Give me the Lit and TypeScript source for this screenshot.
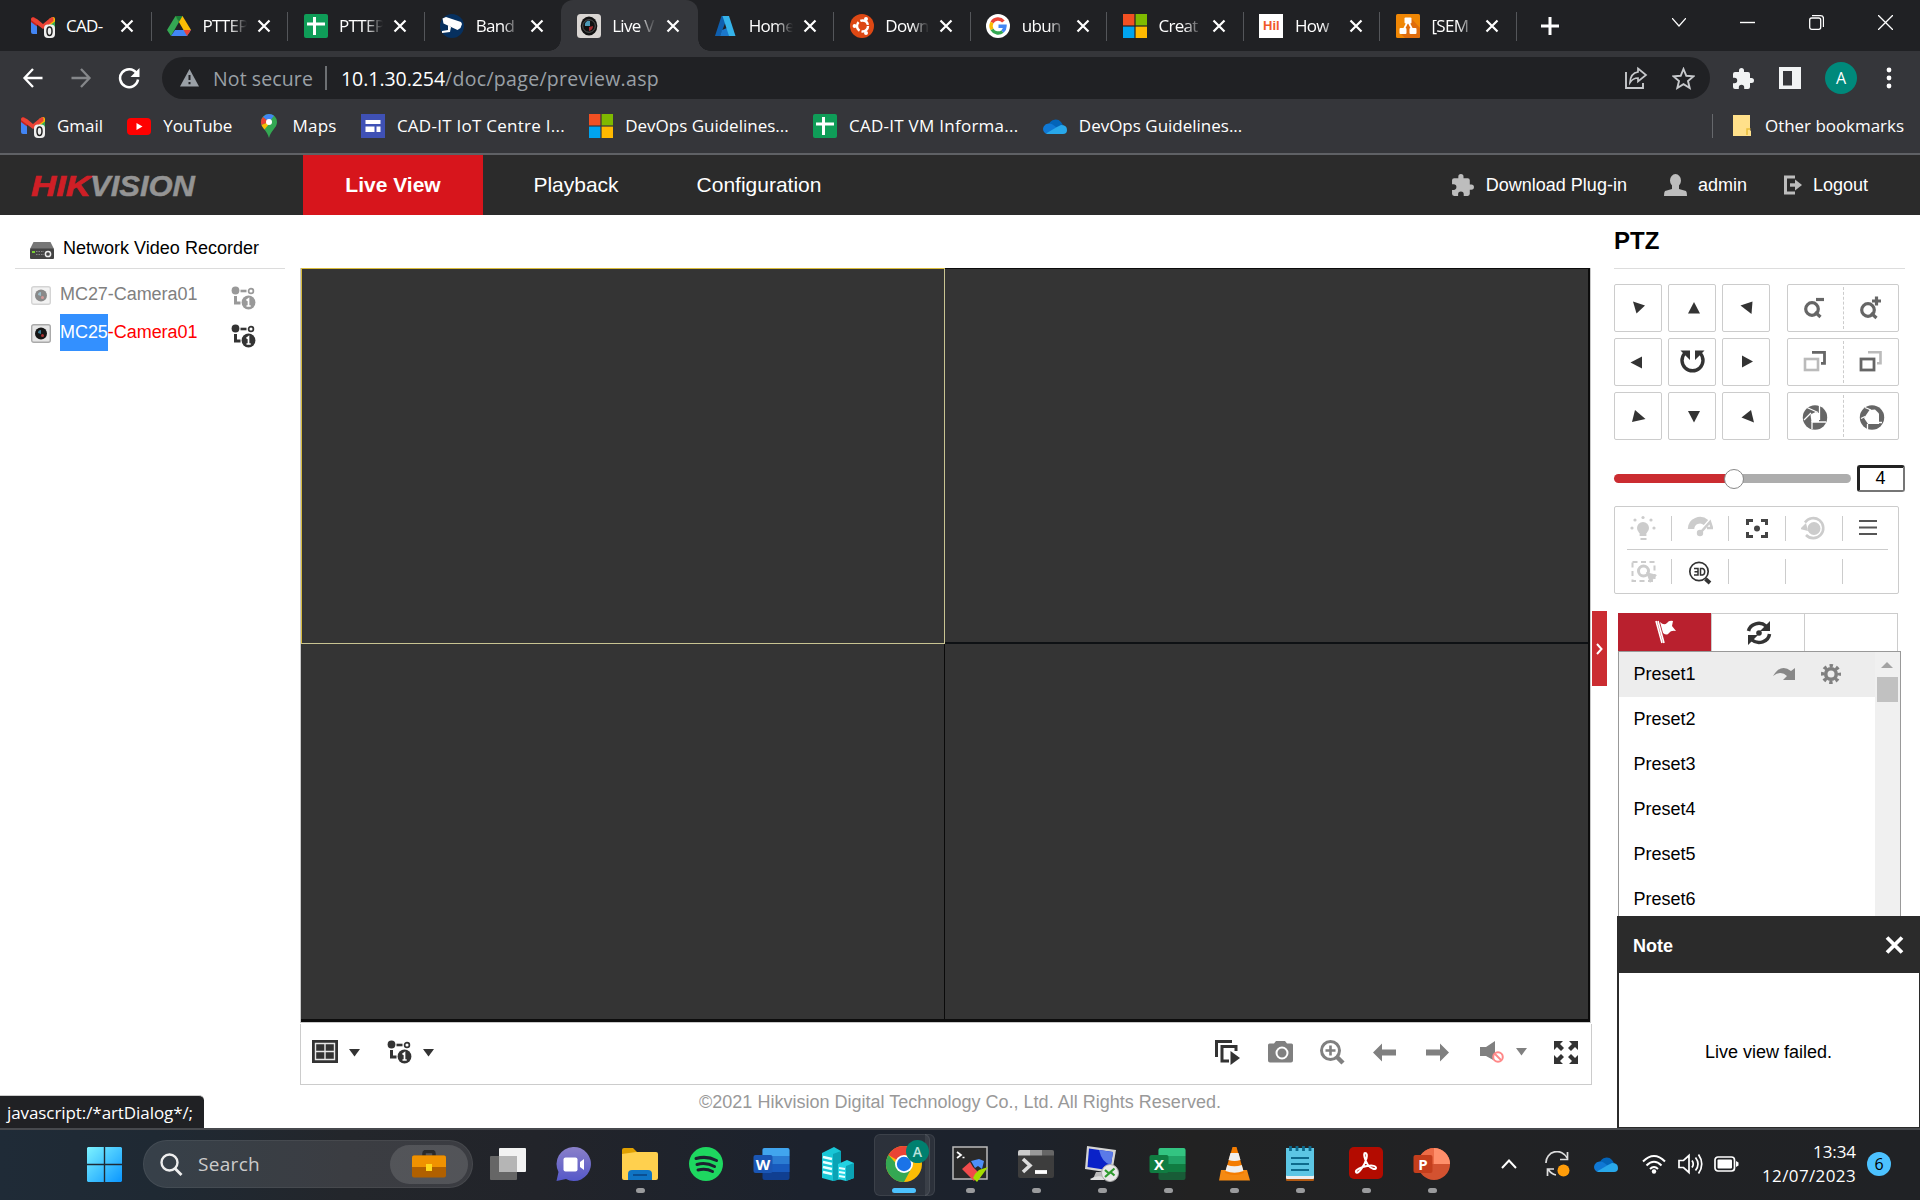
import { LitElement, html, svg, css, nothing, TemplateResult, SVGTemplateResult } from "lit";

/* Text run whose tracking is adjusted so it spans a given width. */
class FitText extends LitElement {
  static properties = { text: {}, w: { type: Number } };
  declare text: string;
  declare w: number;
  static styles = css`
    :host { display: inline-block; white-space: pre; flex: none; }
  `;
  render() {
    return html`<span>${this.text}</span>`;
  }
  firstUpdated() {
    const s = this.renderRoot.querySelector("span") as HTMLElement;
    const gap = (this.w - s.getBoundingClientRect().width) / this.text.length;
    s.style.letterSpacing = gap.toFixed(3) + "px";
  }
}
customElements.define("fit-text", FitText);

const fit = (text: string, w: number) => html`<fit-text .text=${text} .w=${w}></fit-text>`;
const ico = (w: number, h: number, body: SVGTemplateResult, vb = `0 0 ${w} ${h}`) =>
  html`<svg width=${w} height=${h} viewBox=${vb} fill="none">${body}</svg>`;

/* ---------- brand icons ---------- */
const gmail = () => ico(24, 24, svg`
  <path d="M0 5v13q0 2 2 2h4V9z" fill="#4285f4"/><path d="M18 9v11h4q2 0 2-2V5z" fill="#34a853"/>
  <path d="M18 5v7l6-4.500V5q0-2-2-2z" fill="#fbbc04"/><path d="M0 5v3l6 4.500V6L3 3Q0 3 0 5z" fill="#c5221f"/>
  <path d="M2 3.500 6 5l6 5 6-5 3-2 1.500 1v3L12 15 0 6Q0 3 2 3.500z" fill="#ea4335"/>
  <rect x="13" y="10.500" width="11" height="13.500" rx="4" fill="#eee"/>
  <ellipse cx="18.500" cy="17.200" rx="2.500" ry="4.200" stroke="#222" stroke-width="1.500"/>`);
const drive = () => ico(24, 24, svg`
  <path d="M8.500 2h7l8.500 14h-7.500z" fill="#fbbc04"/><path d="M8.500 2 12 8 4 22 0 16z" fill="#34a853"/>
  <path d="M4 22l4-6h16l-4 6z" fill="#4285f4"/><path d="M8.500 2h7L12 8z" fill="#188038"/><path d="M16.500 16H24l-4 6z" fill="#ea4335"/>`);
const sheets = () => ico(24, 24, svg`
  <rect width="24" height="24" rx="2" fill="#0f9d58"/><path d="M3 10h18M10.500 3v18" stroke="#fff" stroke-width="3"/>`);
const cctv = () => ico(24, 24, svg`
  <circle cx="12" cy="12" r="12" fill="#06305f"/><path d="M2.500 4.500 6 3l15 5 1 2-1.500 4-3 2L3.500 9.500z" fill="#fff"/><path d="M8 11l3 2-1 5-8 1v-2l6-1z" fill="#fff"/>`);
const lens = () => ico(24, 24, svg`
  <rect width="24" height="24" rx="3.500" fill="#d9d5d2"/><ellipse cx="12" cy="12" rx="8.300" ry="9.500" fill="#111"/>
  <circle cx="12" cy="12" r="6.300" stroke="#555" stroke-width="1"/><path d="M8 12a4 4 0 0 1 5-5v5z" fill="#4d9ab8"/><path d="M12 13l4-1q0 4-4 5z" fill="#a3282c"/>`);
const azure = () => ico(24, 24, svg`
  <path d="M8.500 2H15L7 22H2z" fill="#0f5fae"/><path d="M9 16l5-2 5 8H7z" fill="#1b78cc"/><path d="M9.500 2H16l6.500 20H16z" fill="#35b3ea"/>`);
const ubuntu = () => ico(24, 24, svg`
  <circle cx="12" cy="12" r="12" fill="#dd4814"/><circle cx="12.500" cy="12" r="5.500" stroke="#fff" stroke-width="2.400" stroke-dasharray="9.500 2"/>
  <circle cx="4.600" cy="12" r="2" fill="#fff"/><circle cx="16" cy="5" r="2" fill="#fff"/><circle cx="16" cy="19" r="2" fill="#fff"/>`);
const google = () => ico(24, 24, svg`
  <circle cx="12" cy="12" r="12" fill="#fff"/><g stroke-width="3.400"><path d="M17.400 7.500A7 7 0 0 0 6 8.500" stroke="#ea4335"/>
  <path d="M6 8.500a7 7 0 0 0 0 7" stroke="#fbbc05"/><path d="M6 15.500a7 7 0 0 0 10.500 2" stroke="#34a853"/><path d="M16.500 17.500a7 7 0 0 0 2.500-5.300h-6.500" stroke="#4285f4"/></g>`);
const msft = () => ico(24, 24, svg`
  <path d="M0 0h11.400v11.400H0z" fill="#f25022"/><path d="M12.600 0H24v11.400H12.600z" fill="#7fba00"/>
  <path d="M0 12.600h11.400V24H0z" fill="#00a4ef"/><path d="M12.600 12.600H24V24H12.600z" fill="#ffb900"/>`);
const hil = () => html`<span class="hil">Hil</span>`;
const drawio = () => ico(24, 24, svg`
  <rect width="24" height="24" rx="1.500" fill="#f08705"/><path d="M15 4l9 10v8q0 2-2 2H9l-5-5z" fill="#df6c0c"/>
  <path d="M12 7 7 17M12 7l5 10" stroke="#fff" stroke-width="1.800"/><rect x="8.500" y="3.500" width="7" height="6" rx="1" fill="#fff"/>
  <rect x="3.500" y="14" width="7" height="6" rx="1" fill="#fff"/><rect x="13.500" y="14" width="7" height="6" rx="1" fill="#fff"/>`);
const youtube = () => ico(24, 24, svg`<rect y="4" width="24" height="17" rx="4" fill="#f00"/><path d="M9.500 9l6 3.500-6 3.500z" fill="#fff"/>`);
const maps = () => ico(24, 24, svg`
  <path d="M12 0a8 8 0 0 1 8 8c0 6-6 8-8 16-2-8-8-10-8-16a8 8 0 0 1 8-8z" fill="#34a853"/><path d="M12 0a8 8 0 0 0-6 3l6 5 5-6.200A8 8 0 0 0 12 0z" fill="#4285f4"/>
  <path d="M6 3a8 8 0 0 0-1.500 8L12 8z" fill="#ea4335"/><path d="M4.500 11q1 2.500 3 4.500L12 10V8z" fill="#fbbc04"/><circle cx="12" cy="8" r="3" fill="#fff"/>`);
const gsite = () => ico(24, 24, svg`<rect width="24" height="24" fill="#3f51b5"/><path d="M4.500 6h15v4h-15zM4.500 12.500h9V18h-9zM15.500 12.500h4V18h-4z" fill="#fff"/>`);
const onedrive = () => ico(24, 24, svg`
  <path d="M6 10a7 6.500 0 0 1 12-2l2 3-8 5z" fill="#0364b8"/><path d="M1 18a5.500 5.500 0 0 1 5-8.500q3 0 5 2l8 6-1 2.500H5q-3 0-4-2z" fill="#0f78d4"/>
  <path d="M3 19.500 14 13l4-2q6 0 6 5 0 4-4 4H6q-2 0-3-.5z" fill="#28a8ea"/>`);

/* ---------- page icons ---------- */
const puzzle = (c: string, s: number) => ico(s, s, svg`
  <path fill=${c} d="M20.500 11H19V7a2 2 0 0 0-2-2h-4V3.500a2.500 2.500 0 0 0-5 0V5H4a2 2 0 0 0-2 2v3.800h1.500a2.700 2.700 0 0 1 0 5.400H2V20a2 2 0 0 0 2 2h3.800v-1.500a2.700 2.700 0 0 1 5.400 0V22H17a2 2 0 0 0 2-2v-4h1.500a2.500 2.500 0 0 0 0-5z"/>`, "1 0 23 23");
const tree = (c: string) => ico(25, 24, svg`
  <circle cx="4.500" cy="4.500" r="3.900" fill=${c}/><path d="M9.500 5h6" stroke=${c} stroke-width="2.600"/><circle cx="20" cy="5" r="2.400" stroke=${c} stroke-width="1.700"/>
  <path d="M4.500 10v7h5" stroke=${c} stroke-width="3"/><circle cx="17.500" cy="16.500" r="6.900" fill=${c}/><path d="M15.500 14.500l2-1.500v6.500M15.500 20h4.200" stroke="#fff" stroke-width="1.700"/>`);
const camIcon = (dim: boolean) => html`<span class="cam ${dim ? "dim" : ""}">${ico(20, 19, svg`
  <rect x=".7" y=".7" width="18.600" height="17.600" rx="2" fill="#e6e6e6" stroke="#aaa" stroke-width="1.400"/><circle cx="10" cy="9.500" r="6" fill="#151515"/>
  <path d="M7 9a3 3 0 0 1 3-3v4z" fill="#3d7d95"/><circle cx="11.500" cy="11.500" r="1.500" fill="#a33"/>`)}</span>`;
const nvr = () => ico(24, 19, svg`
  <path d="M3.500 1h17L24 8H0z" fill="#777"/><rect y="7.500" width="24" height="10.500" rx="1" fill="#444"/><path d="M2 11h3" stroke="#7c3" stroke-width="2"/>
  <path d="M6 10.500h8M6 13.500h8" stroke="#888" stroke-width="1.200" stroke-dasharray="1.500 1"/><circle cx="18" cy="13" r="2.600" fill="#444" stroke="#eee" stroke-width="1.500"/>`);
const caret = (c: string) => ico(11, 8, svg`<path d="M0 0h11L5.500 7.500z" fill=${c}/>`);

const dirs: TemplateResult[] = [
  ico(48, 48, svg`<path d="M19 17.500l12 4-8.500 8z" fill="#333"/>`),
  ico(48, 48, svg`<path d="M26 18l6 11.500H20z" fill="#333"/>`),
  ico(48, 48, svg`<path d="M30.500 17.500l-1 12.500-11-8.500z" fill="#333"/>`),
  ico(48, 48, svg`<path d="M16.500 24.500L28 18.500v12z" fill="#333"/>`),
  ico(48, 48, svg`<path d="M16.500 15.500a10.500 10.500 0 1 0 16 0" stroke="#333" stroke-width="3.400"/><path d="M12.500 12.500h9.500v9.500zM36.500 12.500H27v9.500z" fill="#333"/>`),
  ico(48, 48, svg`<path d="M31 23.500l-11-6v12z" fill="#333"/>`),
  ico(48, 48, svg`<path d="M21 18l10.500 9L18 30z" fill="#333"/>`),
  ico(48, 48, svg`<path d="M26 30.500l6-11.500H20z" fill="#333"/>`),
  ico(48, 48, svg`<path d="M29 18l3 12.500-12.500-5z" fill="#333"/>`),
];
const lensOps: [TemplateResult, TemplateResult][] = [
  [
    ico(28, 28, svg`<circle cx="11" cy="16" r="6.300" stroke="#666" stroke-width="3.200"/><path d="M14 19l5.500 5" stroke="#666" stroke-width="3.200"/><path d="M15 6.500h8" stroke="#666" stroke-width="3.200"/>`),
    ico(28, 28, svg`<circle cx="11" cy="17" r="6.300" stroke="#666" stroke-width="3.200"/><path d="M14 20l5.500 5" stroke="#666" stroke-width="3.200"/><path d="M15 8h9M19.500 3.500v9" stroke="#666" stroke-width="3.200"/>`),
  ],
  [
    ico(28, 28, svg`<rect x="4" y="12" width="13" height="11" stroke="#bbb" stroke-width="2.600"/><path d="M11 5.300h12.500v11H20" stroke="#666" stroke-width="2.800"/>`),
    ico(28, 28, svg`<path d="M11 5.300h12.500v11H20" stroke="#bbb" stroke-width="2.600"/><rect x="4" y="12" width="13" height="11" stroke="#666" stroke-width="2.800"/>`),
  ],
  [
    ico(28, 28, svg`<circle cx="14" cy="15.500" r="12.200" fill="#666"/><path d="M9.500 12.500l5-2.500 3.500 1v9h-7.500z" fill="#fff"/><path d="M6 5.500l11 5M3 18l7-7M11 19v8M11 20h14M18.500 4v14" stroke="#fff" stroke-width="1.300"/>`),
    ico(28, 28, svg`<circle cx="15" cy="15.500" r="12.200" fill="#666"/><path d="M12.500 8 18 7.500l4 4V22H11L7 16z" fill="#fff"/><path d="M8 5.500l6 2.500M4 16.500l4-2M10.500 22v5M22 20.500h3" stroke="#fff" stroke-width="1.300"/>`),
  ],
];
const funcIcons: (TemplateResult | null)[] = [
  ico(26, 26, svg`<circle cx="13" cy="13" r="6" fill="#ccc"/><path d="M10.500 16h5v4h-5zM10.500 24h6" stroke="#ccc" stroke-width="1.800" fill="#ccc"/><g fill="#ccc"><circle cx="13" cy="2.500" r="1.600"/><circle cx="5" cy="5" r="1.600"/><circle cx="21" cy="5" r="1.600"/><circle cx="2" cy="13" r="1.600"/><circle cx="24" cy="13" r="1.600"/></g>`),
  ico(26, 26, svg`<path d="M4 14a9 9 0 0 1 15-6.500" stroke="#ccc" stroke-width="6.500"/><path d="M14 17l9-10 2 6h-5" stroke="#ccc" stroke-width="2.600"/><circle cx="13" cy="18" r="3.200" fill="#ccc"/>`),
  ico(26, 26, svg`<path d="M3.500 10V5.500H9M17 5.500h5.500V10M22.500 17v4.500H17M9 21.500H3.500V17" stroke="#444" stroke-width="3"/><circle cx="13" cy="13.500" r="3" fill="#444"/>`),
  ico(26, 26, svg`<path d="M4 7.500a10 10 0 1 1 1 12.500" stroke="#ccc" stroke-width="2.600"/><circle cx="13" cy="13.500" r="6.500" fill="#ccc"/><path d="M-1 14l6-6 2 8z" fill="#ccc"/>`),
  ico(26, 26, svg`<path d="M4 6h18M4 12.500h18M4 19h18" stroke="#555" stroke-width="2"/>`),
  ico(26, 26, svg`<rect x="1.500" y="3" width="22" height="19" stroke="#ccc" stroke-width="2" stroke-dasharray="5 3.500"/><circle cx="12.500" cy="12" r="5" stroke="#ccc" stroke-width="3"/><path d="M15 13l11 3-7 8z" fill="#ccc"/>`),
  ico(26, 26, svg`<circle cx="12" cy="12.500" r="9.200" stroke="#333" stroke-width="1.700"/><path d="M18.500 20l4.500 4" stroke="#333" stroke-width="4"/><path d="M7 9.500h4V16H7M7.500 12.700H11M13.500 9.500V16h2q2.200-.5 2.200-3.200t-2.200-3.300z" stroke="#333" stroke-width="1.500"/>`),
  null, null, null,
];

/* ---------- task bar icons ---------- */
const office = (dark: string, shades: string[], letter: string, round = false) => ico(38, 38, svg`
  ${round
    ? svg`<circle cx="21" cy="19" r="16" fill=${shades[2]}/><path d="M21 3a16 16 0 0 1 16 16H21z" fill=${shades[0]}/><path d="M21 3v16H5A16 16 0 0 1 21 3z" fill=${shades[1]}/>`
    : svg`<rect x="9.500" y="3" width="27" height="32" rx="2" fill=${shades[3]}/><path d="M9.500 5q0-2 2-2h23q2 0 2 2v6h-27z" fill=${shades[0]}/><path d="M9.500 11h27v8h-27z" fill=${shades[1]}/><path d="M9.500 19h27v8h-27z" fill=${shades[2]}/>`}
  <rect x=".5" y="10" width="19" height="18" rx="2" fill=${dark}/>
  <text x="10" y="24.500" text-anchor="middle" font-family="Open Sans, sans-serif" font-weight="700" font-size="15" fill="#fff">${letter}</text>`);

interface App { icon: TemplateResult; dot?: boolean; active?: boolean }
const apps: App[] = [
  { icon: ico(38, 38, svg`<rect x="1" y="11" width="27" height="24" rx="1" fill="#666"/><rect x="10" y="3" width="27" height="24" rx="1" fill="#f2f2f2"/><path d="M10 11h18v16H10z" fill="#b5b5b5"/>`) },
  { icon: ico(38, 38, svg`<path d="M18 2a17 17 0 1 1-7 32l-9.500 2 2-9A17 17 0 0 1 18 2z" fill="url(#tg)"/><rect x="8.500" y="12.500" width="14" height="14" rx="2" fill="#fff"/><path d="M25 17l4-3v11l-4-3z" fill="#fff"/><defs><linearGradient id="tg" x1="0" y1="0" x2="0" y2="1"><stop stop-color="#8a80c9"/><stop offset="1" stop-color="#5558c9"/></linearGradient></defs>`) },
  { dot: true, icon: ico(38, 38, svg`<path d="M1 5q0-2 2-2h9l4 4v6H1z" fill="#e0a000"/><path d="M1 9l14-2h20q2 0 2 2v24q0 2-2 2H3q-2 0-2-2z" fill="#ffd04e"/><path d="M7 35V29q0-4 4-4h16q4 0 4 4v6z" fill="#0f74c4"/><path d="M12 30h14" stroke="#0a4f92" stroke-width="2"/>`) },
  { icon: ico(38, 38, svg`<circle cx="19" cy="19" r="17" fill="#1ed760"/><path d="M9 13.500q11-3 20.500 2M10 19.500q9-2.500 17.500 2M11 25q8-2 14.500 1.500" stroke="#1c2230" stroke-width="3" stroke-linecap="round"/>`) },
  { icon: office("#1a56b4", ["#41a5ee", "#2b7cd3", "#185abd", "#103f91"], "W") },
  { icon: ico(38, 38, svg`<path d="M3 8l12-6 7 4v28l-8 2-11-3z" fill="#19c6d6"/><path d="M14 9l8-3v28l-8 2z" fill="#0aa3b5"/><path d="M4 12l9 2M4 17l9 2M4 22l9 2M4 27l9 2" stroke="#e8ffff" stroke-width="2.500"/><path d="M19 19l9-4 7 3v15l-8 3-8-2z" fill="#22d3e2"/><path d="M27 21l8-3v15l-8 3z" fill="#0aa3b5"/><path d="M20 23l6 1M20 27l6 1M20 31l6 1" stroke="#e8ffff" stroke-width="2"/>`) },
  { active: true, icon: ico(38, 38, svg`<circle cx="19" cy="19" r="18" fill="#fbbc04"/><path d="M19 19 3.400 10A18 18 0 0 1 34.600 10H19z" fill="#ea4335"/><path d="M3.400 10A18 18 0 0 0 19 37l7-13-7-5-6.500 1z" fill="#34a853"/><circle cx="19" cy="19" r="9" fill="#fff"/><circle cx="19" cy="19" r="7.200" fill="#1a73e8"/>`) },
  { dot: true, icon: ico(38, 38, svg`<rect x="2" y="2" width="34" height="32" fill="#2a2a2a" stroke="#bbb" stroke-width="1.500"/><path d="M6 7l4 3-4 3M11.500 12.500h2" stroke="#fff" stroke-width="1.700"/><path d="M11 24l8-7 3 5 6 6-5 8-3-3z" fill="#f14b4b"/><path d="M20 16l8-2 5 2-2 8-4-3-3 2z" fill="#4f8ff7"/><path d="M24 29l4-4 3-1 6-2-11 15-4-4z" fill="#a4dd00"/>`) },
  { dot: true, icon: ico(38, 38, svg`<rect x="1" y="5" width="36" height="28" rx="2" fill="#3d3d3d"/><path d="M1 7q0-2 2-2h10v5.500H1z" fill="#ccc"/><path d="M13 5h12v5.500H13z" fill="#999"/><path d="M25 5h10q2 0 2 2v3.500H25z" fill="#666"/><path d="M6 14l7 6.500L6 27" stroke="#ddd" stroke-width="3.600"/><path d="M18 27h12" stroke="#fff" stroke-width="3.800"/>`) },
  { dot: true, icon: ico(38, 38, svg`<path d="M13 27h10v7H10z" fill="#bbb"/><path d="M7 34q6-4 14-2v3H8z" fill="#ddd"/><path d="M4 1l29 4-4 23-27-4z" fill="#d5d5d5"/><path d="M6 3.500l24 3.500-3 18.500L4.500 22z" fill="#0a22c8"/><path d="M16 5l14 2-2 13q-9-2-12-15z" fill="#5a7ae8"/><circle cx="27" cy="28" r="8.500" fill="#e8e8e8" stroke="#aaa"/><path d="M22 25l4 3.500-4 3.500M31.500 23.500l-4 3.500 4 3.500" stroke="#2f9a2f" stroke-width="2.200"/>`) },
  { dot: true, icon: office("#107c41", ["#33c481", "#21a366", "#107c41", "#185c37"], "X") },
  { dot: true, icon: ico(38, 38, svg`<path d="M6 25h26l3 10.500H4z" fill="#f58a12"/><path d="M17.500 2h4L29 28q-9.500 4-19 0z" fill="#f47c00"/><path d="M15.500 8h8l2 7q-6 2-12 0zM12.200 20q7 2.500 14.600 0l1.700 6q-9 3.500-18 0z" fill="#eee"/>`) },
  { dot: true, icon: ico(38, 38, svg`<rect x="5" y="30" width="28" height="6" rx="1" fill="#b35a12"/><rect x="5" y="3" width="28" height="31" rx="1" fill="#eee"/><rect x="5" y="3" width="28" height="28" rx="1" fill="#5cc6e4"/><path d="M10 13h18M10 19h18M10 25h18" stroke="#0d6a8c" stroke-width="2.200"/><path d="M9.500 1v5M16 1v5M22.500 1v5M29 1v5" stroke="#0d6a8c" stroke-width="2.800"/>`) },
  { dot: true, icon: ico(38, 38, svg`<rect x="2" y="2" width="34" height="32" rx="5" fill="#b30b00"/><path d="M18 8c4 0 1 9-3 15-2 3-5 6-6 4s5-5 11-6 9 0 9 2-5 1-8-3-5-12-3-12z" stroke="#fff" stroke-width="2"/>`) },
  { dot: true, icon: office("#c43e1c", ["#ff8f6b", "#ed6c47", "#d35230"], "P", true) },
];

interface Tab { t: string; icon: TemplateResult; active?: boolean; sep?: boolean }
const tabs: Tab[] = [
  { t: "CAD-", icon: gmail(), sep: true },
  { t: "PTTEP", icon: drive(), sep: true },
  { t: "PTTEP", icon: sheets(), sep: true },
  { t: "Band", icon: cctv() },
  { t: "Live V", icon: lens(), active: true },
  { t: "Home", icon: azure(), sep: true },
  { t: "Down", icon: ubuntu(), sep: true },
  { t: "ubun", icon: google(), sep: true },
  { t: "Creat", icon: msft(), sep: true },
  { t: "How", icon: hil(), sep: true },
  { t: "[SEM", icon: drawio(), sep: true },
];
const bookmarks: [TemplateResult, string, number][] = [
  [gmail(), "Gmail", 46], [youtube(), "YouTube", 69], [maps(), "Maps", 44],
  [gsite(), "CAD-IT IoT Centre I...", 168], [msft(), "DevOps Guidelines...", 163.5],
  [sheets(), "CAD-IT VM Informa...", 169.5], [onedrive(), "DevOps Guidelines...", 163.5],
];

class AppRoot extends LitElement {
  static styles = css`
    :host { display: block; width: 1920px; height: 1200px; overflow: hidden; position: relative; background: #fff;
      font: 18px/1 "Liberation Sans", Arial, sans-serif; color: #000; }
    * { box-sizing: border-box; }
    svg { display: block; flex: none; }
    .row { display: flex; align-items: center; }
    .ui { font-family: "Open Sans", "Noto Sans", sans-serif; }
    .grow { flex: 1; }
    .s11 { width: 11px; } .s12 { width: 12px; } .s24 { width: 24px; } .s26 { width: 26px; }
    .s27 { width: 27px; } .s28 { width: 28px; } .s30 { width: 30px; } .s31 { width: 31px; }

    .tabs { height: 51px; background: #202124; padding-left: 15px; color: #fff; font-size: 17px; }
    .tab { width: 136.550px; height: 51px; padding-left: 15.500px; position: relative; flex: none; }
    .tab.on { background: #35363a; border-radius: 12px 12px 0 0; }
    .tab.on::before, .tab.on::after { content: ""; position: absolute; bottom: 0; width: 12px; height: 12px; }
    .tab.on::before { left: -12px; background: radial-gradient(circle at 0 0, transparent 11.500px, #35363a 12px); }
    .tab.on::after { right: -12px; background: radial-gradient(circle at 100% 0, transparent 11.500px, #35363a 12px); }
    .tab.sep::after { content: ""; position: absolute; right: 0; top: 12px; width: 1px; height: 29px; background: #54565a; }
    .title { width: 44px; margin: 0 10px 0 11.500px; overflow: hidden; white-space: nowrap; line-height: 24px; letter-spacing: -.7px;
      -webkit-mask-image: linear-gradient(90deg, #000 60%, transparent 100%); mask-image: linear-gradient(90deg, #000 60%, transparent 100%); }
    .tab:first-child .title { -webkit-mask-image: none; mask-image: none; }
    .hil { width: 24px; height: 24px; background: #fff; color: #f0592a; font: 700 13px/24px "Liberation Sans", sans-serif; text-align: center; flex: none; }
    .plus { margin-left: 24px; }
    .win { gap: 54px; padding: 0 27px 7px 0; }

    .bar { height: 54px; background: #35363a; padding: 0 22px; }
    .nav { gap: 26px; width: 140px; flex: none; }
    .omni { width: 1548px; flex: none; height: 42px; border-radius: 21px; background: #202124; padding: 0 15px 0 18px; color: #9aa0a6; font-size: 19.500px; }
    .omni .vsep { width: 2px; height: 24px; background: #6d7073; margin: 0 14px 0 12px; }
    .omni .host { color: #fff; }
    .omni .lab { margin-left: 14px; }
    .omni fit-text { position: relative; top: 1px; }
    .tools { padding-left: 22px; gap: 24px; flex: none; }
    .tools svg:last-child { margin-left: 5px; }
    .ava { width: 32px; height: 32px; border-radius: 50%; background: #00897b; color: #fff; font-size: 16px; line-height: 32px; text-align: center; flex: none; }
    .marks { height: 50px; background: #35363a; padding: 0 16px 7px 21px; color: #fff; font-size: 17px; border-bottom: 2px solid #5f6165; }
    .marks .mk { gap: 12px; margin-right: 24.300px; }
    .marks fit-text { position: relative; top: -.5px; }
    .marks .vs { width: 1px; height: 24px; background: #66686c; margin-right: 20px; }
    .marks .other { gap: 14px; }

    .head { height: 60px; background: #2b2b2b; color: #fff; }
    .logo { width: 303px; padding-left: 31px; }
    .nv { font-size: 21px; height: 60px; line-height: 60px; text-align: center; }
    .nv.live { width: 180px; background: #d7151c; font-weight: 700; }
    .nv.pb { width: 186px; } .nv.cf { width: 180px; }
    .hr { padding-right: 52px; }
    .hr .u { gap: 11px; margin-left: 37px; }

    .page { display: flex; height: 913px; }
    .side { width: 300px; padding: 14px 15px 0; }
    .side .nvr { height: 40px; gap: 9px; padding: 0 0 1px 15px; border-bottom: 1px solid #dcdcdc; }
    .side .nvr svg { position: relative; top: 2px; }
    .list { padding: 6px 0 0 16px; }
    .dev { height: 38px; color: #808080; }
    .dev .nm { width: 180px; padding-left: 9px; line-height: 37px; flex: none; letter-spacing: -.05px; }
    .dev.on { color: #f00; }
    .dev mark { display: inline-block; background: #3390ff; color: #fff; }
    .cam { display: block; width: 20px; position: relative; top: 1px; } .cam.dim { opacity: .5; }
    .dev > svg { position: relative; top: 4px; }

    .main { width: 1292px; padding-top: 53px; }
    .video { width: 1291px; height: 755px; border: solid #c9c9c9; border-width: 0 1px 1px 1px; }
    .grid { height: 754px; display: grid; grid-template: 375px 1fr / 644px 1fr; background: #343434; border: solid #0c0c0c; border-width: 1px 2px 3px 0; }
    .cell { border-right: 1px solid #0a0a0a; border-bottom: 2px solid #0e1114; }
    .cell:nth-child(2n) { border-right: 0; }
    .cell:nth-child(n+3) { border-bottom: 0; }
    .cell.sel { border: 1px solid #d8bb3c; margin: -1px 0 0 0; height: 376px; border-right-color: #c9c492; border-bottom-color: #c9c492; }
    .ctl { height: 61px; margin-top: 1px; border: 1px solid #ccc; border-top: 0; padding: 0 13px 5px 11px; }
    .ctl .dd { gap: 11px; }
    .ctl > svg { position: relative; top: .5px; }
    .ctl .dd svg:last-child { position: relative; top: 1px; }
    .foot { color: #999; margin-top: 8px; padding-left: 399px; }

    .ptz { flex: 1; padding: 14px 15px 0 22px; }
    .ptz h2 { margin: 0; font-size: 24px; line-height: 24px; height: 40px; border-bottom: 1px solid #ddd; }
    .pad { display: flex; gap: 17px; margin-top: 15px; }
    .dirs { display: grid; grid-template-columns: repeat(3, 48px); gap: 6px; }
    .dirs div, .ops div { border: 1px solid #ccc; border-radius: 2px; height: 48px; }
    .dirs svg { margin: -1px; }
    .ops { display: grid; gap: 6px; width: 112px; }
    .ops div { display: flex; align-items: center; }
    .ops span { flex: 1; display: flex; justify-content: center; height: 42px; align-items: center; padding-bottom: 3px; }
    .ops div:last-child span { padding-bottom: 1px; }
    .ops span:first-child { border-right: 1px dashed #ccc; }
    .speed { margin-top: 25px; height: 27px; }
    .track { width: 237px; height: 9px; border-radius: 5px; background: linear-gradient(90deg, #cb2c31 120px, #adadad 120px); display: flex; align-items: center; padding-left: 110px; margin-right: 6px; }
    .knob { width: 20px; height: 20px; border-radius: 50%; background: #fff; border: 1px solid #888; flex: none; }
    .num { width: 48px; height: 27px; border: 3px solid; border-width: 3px 2px 2px 3px; border-color: #222 #767676 #767676 #222; border-radius: 3px; text-align: center; line-height: 20px; padding-right: 2px; margin-top: -1px; }
    .func { width: 285px; height: 88px; margin-top: 14px; border: 1px solid #ccc; border-radius: 2px; display: grid; grid-template: 43px 43px / repeat(5, 57px); }
    .func div { display: flex; align-items: center; justify-content: center; }
    .func div span { height: 25px; width: 57px; border-right: 1px solid #ccc; display: flex; justify-content: center; align-items: center; }
    .func div:nth-child(5n) span { border: 0; }
    .func div:nth-child(-n+5) { border-bottom: 1px solid #ccc; }
    .func div:nth-child(1) { margin-left: 12px; }
    .func div:nth-child(1) span { width: 45px; padding-right: 12px; }
    .func div:nth-child(5) { margin-right: 12px; }
    .func div:nth-child(5) span { padding-left: 4px; }
    .func div:nth-child(6) span { padding-left: 2px; }
    .ptabs { display: flex; margin: 19px 0 0 4px; width: 280px; height: 38px; }
    .ptabs div { flex: 1; border: 1px solid #ccc; border-bottom: 0; margin-left: -1px; display: flex; align-items: center; justify-content: center; padding-left: 2px; }
    .ptabs .on { background: #b9202e; border-color: #b9202e; margin-left: 0; }
    .presets { margin-left: 4px; width: 283px; height: 290px; border: 1px solid #999; display: flex; }
    .items { flex: 1; }
    .items .it { height: 45px; padding: 0 34px 2px 14.500px; gap: 25px; }
    .items .it:first-child { background: #ededed; }
    .scroll { width: 25px; background: #f0f0f0; padding: 10px 2px; }
    .scroll svg { margin-left: 4px; }
    .thumb { width: 21px; height: 25px; background: #c1c1c1; margin-top: 9px; }

    .handle { position: absolute; left: 1592px; top: 611px; width: 15px; height: 75px; background: #cb2c31; display: flex; align-items: center; justify-content: center; }
    .note { position: absolute; left: 1617px; top: 916px; width: 303px; height: 212px; background: #fff; border: solid #2b2b2b; border-width: 0 1px 1px 2px; }
    .note header { height: 57px; background: #2b2b2b; color: #fff; font-weight: 700; justify-content: space-between; padding: 2px 15px 0 14px; }
    .note header svg { position: relative; top: -1px; }
    .note p { margin: 0; text-align: center; line-height: 158px; padding-right: 1px; }
    .status { position: absolute; left: 0; top: 1095px; width: 204px; height: 33px; background: #202124; color: #fff; border-radius: 0 5px 0 0; border-top: 1px solid #ccc; padding-left: 7px; font-size: 17px; }

    .task { height: 72px; border-top: 2px solid #47494d; background: linear-gradient(90deg, #1f2b37 0, #1f2933 8%, #23262b 18%, #22242a 28%, #1c222d 42%, #1c222c 52%, #222222 62%, #212224 75%, #202225 100%); color: #fff; padding: 0 0 2px 87px; }
    .search { width: 330px; height: 48px; margin: 0 2px 0 21px; border-radius: 24px; background: #ffffff1c; border: 1px solid #ffffff10; padding: 0 4px 0 16px; color: #ccc; font-size: 19px; gap: 15px; flex: none; }
    .case { width: 78px; height: 39px; border-radius: 20px; background: #ffffff20; justify-content: center; }
    .app { width: 66px; height: 66px; display: flex; flex-direction: column; align-items: center; justify-content: center; position: relative; flex: none; }
    .dot { position: absolute; top: 57px; width: 9px; height: 5px; border-radius: 3px; background: #9a9b9d; }
    .app.on::before, .app.on::after { content: ""; position: absolute; left: 3px; top: 3px; width: 54px; height: 60px; border-radius: 6px; background: #ffffff12; border: 1px solid #ffffff14; }
    .app.on::after { left: 54px; width: 9px; border-radius: 0 6px 6px 0; border-left: 0; }
    .app.on svg { position: relative; }
    .app.on .dot { width: 24px; background: #4cc2ff; }
    .bdg { position: absolute; left: 35px; top: 9px; width: 23px; height: 23px; border-radius: 50%; background: #00806f; color: #b9e3dd; font-size: 14px; font-weight: 600; line-height: 23px; text-align: center; z-index: 1; }
    .tray { margin-left: 36px; }
    .clock { display: flex; flex-direction: column; align-items: flex-end; font-size: 17px; width: 117px; gap: 7px; padding-bottom: 2px; }
    .six { width: 24px; height: 24px; border-radius: 50%; background: #4cc2ff; color: #000; font-size: 16px; line-height: 24px; text-align: center; margin-left: 11px; }
  `;

  renderBrowser() {
    const W = "#fff";
    return html`
      <div class="tabs row ui">
        ${tabs.map((t) => html`<div class="tab row ${t.active ? "on" : ""} ${t.sep ? "sep" : ""}">
          ${t.icon}<div class="title">${t.t}</div>${ico(14, 14, svg`<path d="M1.500 1.500l11 11M12.500 1.500l-11 11" stroke="#fff" stroke-width="2.200"/>`)}</div>`)}
        <div class="plus">${ico(18, 18, svg`<path d="M0 9h18M9 0v18" stroke="#fff" stroke-width="3"/>`)}</div>
        <div class="grow"></div>
        <div class="row win">
          ${ico(14, 9, svg`<path d="M0 0l7 8 7-8" stroke=${W} stroke-width="1.200"/>`)}
          ${ico(15, 15, svg`<path d="M0 7.500h15" stroke=${W} stroke-width="1.400"/>`)}
          ${ico(15, 15, svg`<rect x=".7" y="3" width="11" height="11.300" rx="2" stroke=${W} stroke-width="1.300"/><path d="M3 .7h8.500q3 0 3 3V12" stroke=${W} stroke-width="1.300"/>`)}
          ${ico(15, 15, svg`<path d="M0 0l15 15M15 0L0 15" stroke=${W} stroke-width="1.300"/>`)}
        </div>
      </div>
      <div class="bar row ui">
        <div class="row nav">
          ${ico(22, 22, svg`<path d="M20.500 11H3M11 2L2.500 11l8.500 9" stroke=${W} stroke-width="2.300"/>`)}
          ${ico(22, 22, svg`<path d="M1.500 11H19M11 2l8.500 9-8.500 9" stroke="#85878a" stroke-width="2.300"/>`)}
          ${ico(22, 22, svg`<path d="M18.500 6A9 9 0 1 0 20 12.500" stroke=${W} stroke-width="2.500"/><path d="M21.500 1v9h-9z" fill=${W}/>`)}
        </div>
        <div class="omni row">
          ${ico(19, 18, svg`<path d="M9.500 0L19 17.500H0z" fill="#9aa0a6"/><path d="M9.500 6v5M9.500 13v2.200" stroke="#202124" stroke-width="2"/>`)}
          <span class="lab">${fit("Not secure", 100)}</span><i class="vsep"></i>
          <span class="host">${fit("10.1.30.254", 104)}</span>${fit("/doc/page/preview.asp", 214)}
          <div class="grow"></div>
          ${ico(24, 24, svg`<path d="M2 6v16h17v-5" stroke="#c7c9cc" stroke-width="1.900"/><path d="M14 2.500l8 6.500-8 6.500V12q-5 0-8 4.500Q6.500 7 14 6z" stroke="#c7c9cc" stroke-width="1.700"/>`)}
          <span class="s24"></span>
          ${ico(23, 23, svg`<path d="M11.500 2l2.800 6.800 7.200.5-5.500 4.700 1.700 7-6.200-3.800-6.200 3.800 1.700-7L1.500 9.300l7.200-.5z" stroke="#c7c9cc" stroke-width="1.900"/>`)}
        </div>
        <div class="tools row">
          ${puzzle("#f1f3f4", 23)}
          ${ico(22, 22, svg`<path d="M0 0h22v22H0zM4 4v14.500h9V4z" fill="#f1f3f4" fill-rule="evenodd"/>`)}
          <div class="ava">A</div>
          ${ico(6, 22, svg`<g fill="#fff"><circle cx="3" cy="3" r="2.400"/><circle cx="3" cy="11" r="2.400"/><circle cx="3" cy="19" r="2.400"/></g>`)}
        </div>
      </div>
      <div class="marks row ui">
        ${bookmarks.map(([i, t, w]) => html`<div class="mk row">${i}${fit(t, w)}</div>`)}
        <div class="grow"></div><i class="vs"></i>
        <div class="row other">${ico(18, 23, svg`<path d="M0 1h17v15l1 1v5H0z" fill="#ffe08a"/><path d="M14 21v-6h3.500" stroke="#e9bd3a" stroke-width="1.500"/>`)}${fit("Other bookmarks", 139)}</div>
      </div>`;
  }

  renderHeader() {
    return html`<div class="head row">
      <div class="logo"><svg width="166" height="24" viewBox="0 0 166 24">
        <text x="0" y="22.500" font-family="Liberation Sans, sans-serif" font-size="30" font-weight="700" font-style="italic" fill="#cf1f26" stroke="#cf1f26" stroke-width=".7" textLength="60" lengthAdjust="spacingAndGlyphs">HIK</text>
        <text x="59" y="22.500" font-family="Liberation Sans, sans-serif" font-size="30" font-weight="700" font-style="italic" fill="#949494" stroke="#949494" stroke-width=".5" textLength="105" lengthAdjust="spacingAndGlyphs">VISION</text></svg></div>
      <div class="nv live">Live View</div><div class="nv pb">Playback</div><div class="nv cf">Configuration</div>
      <div class="grow"></div>
      <div class="row hr">
        <div class="row u">${puzzle("#bdbdbd", 24)}<span>Download Plug-in</span></div>
        <div class="row u">${ico(23, 22, svg`<ellipse cx="11.500" cy="6.500" rx="5.500" ry="6.500" fill="#bdbdbd"/><path d="M8 10h7v5l7 2q1 1 1 5H0q0-4 1-5l7-2z" fill="#bdbdbd"/>`)}<span>admin</span></div>
        <div class="row u">${ico(18, 20, svg`<path d="M11 2H1.500v16H11" stroke="#bdbdbd" stroke-width="3"/><path d="M6 10h6" stroke="#bdbdbd" stroke-width="3.400"/><path d="M11 4.500l7 5.500-7 5.500z" fill="#bdbdbd"/>`)}<span>Logout</span></div>
      </div></div>`;
  }

  renderPage() {
    const g = "#808080", d = "#333";
    return html`<div class="page">
      <div class="side">
        <div class="nvr row">${nvr()}<span>${fit("Network Video Recorder", 196)}</span></div>
        <div class="list">
          <div class="dev row">${camIcon(true)}<span class="nm">MC27-Camera01</span>${tree("#999")}</div>
          <div class="dev row on">${camIcon(false)}<span class="nm"><mark>MC25</mark>-Camera01</span>${tree("#333")}</div>
        </div>
      </div>
      <div class="main">
        <div class="video"><div class="grid"><div class="cell sel"></div><div class="cell"></div><div class="cell"></div><div class="cell"></div></div></div>
        <div class="ctl row">
          <div class="row dd">${ico(26, 23, svg`<path d="M0 0h26v23H0z" fill=${d}/><path d="M3.500 3.500h19v16h-19zM13 3.500v16M3.500 11.500h19" stroke="#e8e8e8" stroke-width="1.400"/>`)}${caret(d)}</div>
          <span class="s27"></span>
          <div class="row dd">${tree(d)}${caret(d)}</div>
          <div class="grow"></div>
          ${ico(25, 25, svg`<path d="M1.500 17V1.500H17" stroke=${d} stroke-width="3"/><path d="M21 11V6.500H7V21h7" stroke=${d} stroke-width="3"/><path d="M15.500 11l9.500 7-9.500 7z" fill=${d}/>`)}
          <span class="s28"></span>
          ${ico(25, 22, svg`<path d="M0 4q0-1.500 1.500-1.500H6L8 0h9l2 2.500h4.500Q25 2.500 25 4v15.500q0 2-2 2H2q-2 0-2-2z" fill=${g}/><circle cx="14" cy="12" r="5.500" stroke="#fff" stroke-width="2"/>`)}
          <span class="s27"></span>
          ${ico(25, 25, svg`<circle cx="10.500" cy="10.500" r="9" stroke=${g} stroke-width="3"/><path d="M17 17l6 6" stroke=${g} stroke-width="4.500"/><path d="M5.500 10.500h10M10.500 5.500v10" stroke=${g} stroke-width="2.600"/>`)}
          <span class="s28"></span>
          ${ico(23, 19, svg`<path d="M0 9.500L9 .5v6h14v6H9v6z" fill=${g}/>`)}
          <span class="s30"></span>
          ${ico(23, 19, svg`<path d="M23 9.500L14 .5v6H0v6h14v6z" fill=${g}/>`)}
          <span class="s31"></span>
          ${ico(24, 22, svg`<path d="M0 6h6l9-6v20l-9-5H0z" fill=${g}/><circle cx="18" cy="16" r="4.800" fill="#fff" stroke="#f88" stroke-width="2"/><path d="M15 13l6 6" stroke="#f88" stroke-width="2"/>`)}
          <span class="s12"></span>${caret(g)}<span class="s27"></span>
          ${ico(24, 23, svg`<g fill=${d}><path d="M0 0h9L6 3l4 4-3 3-4-4-3 3zM24 0h-9l3 3-4 4 3 3 4-4 3 3zM0 23h9l-3-3 4-4-3-3-4 4-3-3zM24 23h-9l3-3-4-4 3-3 4 4 3-3z"/></g>`)}
        </div>
        <div class="foot">${fit("©2021 Hikvision Digital Technology Co., Ltd. All Rights Reserved.", 522)}</div>
      </div>
      <div class="ptz">
        <h2>PTZ</h2>
        <div class="pad">
          <div class="dirs">${dirs.map((x) => html`<div>${x}</div>`)}</div>
          <div class="ops">${lensOps.map(([a, b]) => html`<div><span>${a}</span><span>${b}</span></div>`)}</div>
        </div>
        <div class="row speed"><div class="track"><div class="knob"></div></div><div class="num">4</div></div>
        <div class="func">${funcIcons.map((x) => html`<div><span>${x ?? nothing}</span></div>`)}</div>
        <div class="ptabs">
          <div class="on">${ico(24, 25, svg`<path d="M2 1l6 22M4 1l6 22" stroke="#fff" stroke-width="1.600"/><path d="M6 2q4 4 7 1 2-3 6-2l-1 5 4 5q-5-1-7 2-2 3-6 0z" fill="#fff"/>`)}</div>
          <div>${ico(26, 26, svg`<path d="M2.500 11A10.500 9.500 0 0 1 20 6M23.500 14A10.500 9.500 0 0 1 6 20" stroke="#333" stroke-width="3.500"/><path d="M24 1v10H14zM2 25V15h10z" fill="#333"/><circle cx="13" cy="13" r="2.800" fill="#333"/>`)}</div>
          <div></div>
        </div>
        <div class="presets">
          <div class="items">
            ${[1, 2, 3, 4, 5, 6].map((n) => html`<div class="it row"><span>Preset${n}</span><span class="grow"></span>
              ${n === 1 ? html`${ico(23, 14, svg`<path d="M0 9Q8-4 18 4l4-3v12H10l4-4Q8 3 0 9z" fill="#888"/>`)}${ico(20, 20, svg`<circle cx="10" cy="10" r="5.300" stroke="#808080" stroke-width="3.600"/><circle cx="10" cy="10" r="8.300" stroke="#808080" stroke-width="3.400" stroke-dasharray="3.400 3.120" stroke-dashoffset="1.700"/>`)}` : nothing}</div>`)}
          </div>
          <div class="scroll">${ico(12, 6, svg`<path d="M6 0l6 6H0z" fill="#a3a3a3"/>`)}<div class="thumb"></div></div>
        </div>
      </div>
    </div>`;
  }

  renderTaskbar() {
    const W = "#fff";
    return html`<div class="task row ui">
      ${ico(35, 35, svg`<defs><linearGradient id="wg" x1="0" y1="0" x2="1" y2="1"><stop stop-color="#7df3ff"/><stop offset="1" stop-color="#0a96ff"/></linearGradient></defs><path d="M1 0h15.800v16.800H0V1zM18.200 0H34l1 1v15.800H18.200zM0 18.200h16.800V35H1l-1-1zM18.200 18.200H35V34l-1 1H18.200z" fill="url(#wg)"/>`)}
      <div class="search row">
        ${ico(23, 23, svg`<circle cx="9.500" cy="9.500" r="8" stroke="#eee" stroke-width="2.400"/><path d="M15 15.500l6.500 6.500" stroke="#eee" stroke-width="2.800"/>`)}
        ${fit("Search", 62)}<div class="grow"></div>
        <div class="case row">${ico(34, 28, svg`<path d="M12 6V3.500Q12 1.500 14 1.500h6q2 0 2 2V6" stroke="#292929" stroke-width="3.500"/><rect y="5.500" width="34" height="22" rx="2" fill="#b06000"/><path d="M0 7.500q0-2 2-2h30q2 0 2 2V17H0z" fill="#f09200"/><rect x="14" y="14" width="6" height="7" fill="#ffd71a"/>`)}</div>
      </div>
      ${apps.map((a) => html`<div class="app ${a.active ? "on" : ""}">${a.icon}${a.active ? html`<span class="bdg">A</span>` : nothing}${a.dot || a.active ? html`<i class="dot"></i>` : nothing}</div>`)}
      <div class="tray row">
        ${ico(16, 10, svg`<path d="M1 9l7-7.500L15 9" stroke=${W} stroke-width="2"/>`)}
        <span class="s28"></span>
        ${ico(25, 26, svg`<path d="M1 12A11 11 0 0 1 22 7M22.500 1v7.500H15M2.500 25v-7H9M3 18q3 5 8 6" stroke="#ddd" stroke-width="1.700"/><circle cx="18.500" cy="19.500" r="6" fill="#ff9d0a"/>`)}
        <span class="s24"></span>${onedrive()}<span class="s24"></span>
        ${ico(24, 20, svg`<path d="M1 7.500q11-11 22 0M4.500 11.500q7.500-7.500 15 0M8 15q4-4 8 0" stroke=${W} stroke-width="2"/><circle cx="12" cy="17.500" r="2.200" fill=${W}/>`)}
        <span class="s12"></span>
        ${ico(25, 22, svg`<path d="M1 7.500h4.500L11 2.500v17l-5.500-5H1z" stroke=${W} stroke-width="1.700"/><path d="M14 7.500q2.500 3.500 0 7M17.500 4.500q5 6.500 0 13M20.500 1.500q6.500 9.500 0 19" stroke=${W} stroke-width="1.700"/>`)}
        <span class="s11"></span>
        ${ico(25, 16, svg`<rect x="1" y="1" width="19.500" height="14" rx="3" stroke=${W} stroke-width="1.700"/><rect x="3.500" y="3.500" width="14.500" height="9" rx="1" fill=${W}/><path d="M22 5v6l2.500-1.500v-3z" fill=${W}/>`)}
        <div class="clock">${fit("13:34", 43)}${fit("12/07/2023", 94)}</div>
        <div class="six">6</div>
      </div>
    </div>`;
  }

  render() {
    return html`${this.renderBrowser()}${this.renderHeader()}${this.renderPage()}${this.renderTaskbar()}
      <div class="handle">${ico(7, 12, svg`<path d="M1 1l4.500 5L1 11" stroke="#fff" stroke-width="2"/>`)}</div>
      <div class="note"><header class="row"><span>Note</span>${ico(19, 18, svg`<path d="M2 1.500l15 15M17 1.500l-15 15" stroke="#fff" stroke-width="3.800"/>`)}</header><p>Live view failed.</p></div>
      <div class="status row ui">${fit("javascript:/*artDialog*/;", 186)}</div>`;
  }
}
customElements.define("app-root", AppRoot);
